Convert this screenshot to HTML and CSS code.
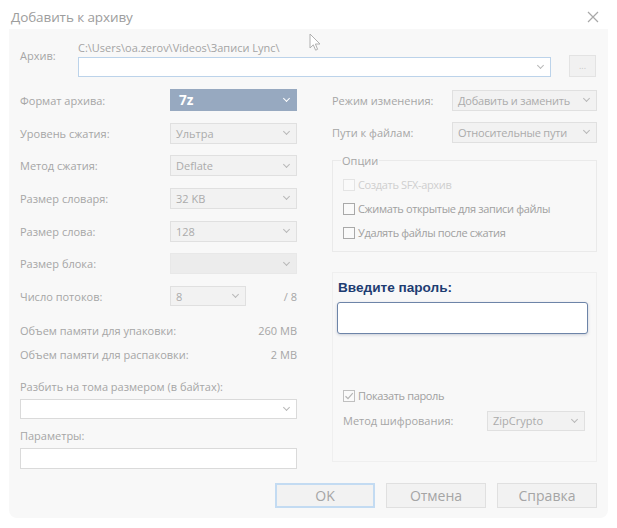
FILE: index.html
```html
<!DOCTYPE html>
<html lang="ru">
<head>
<meta charset="utf-8">
<title>Добавить к архиву</title>
<link rel="stylesheet" href="styles.css">
</head>
<body>
<div class="window">
  <div class="titlebar">
    <span class="title">Добавить к архиву</span>
    <svg class="close" width="12" height="12" viewBox="0 0 12 12"><path d="M1 1L11 11M11 1L1 11" stroke="#a8a8a8" stroke-width="1.2" fill="none"/></svg>
  </div>
  <div class="panel">
    <div class="archive-row">
      <span class="lbl archive-lbl">Архив:</span>
      <div class="archive-main">
        <div class="path">C:\Users\oa.zerov\Videos\Записи Lync\</div>
        <div class="combo archive-combo"><span></span><i class="chev"></i></div>
      </div>
      <div class="browse">...</div>
    </div>

    <div class="columns">
      <div class="left">
        <div class="frow"><span class="lbl">Формат архива:</span><div class="select primary"><span>7z</span><i class="chev white"></i></div></div>
        <div class="frow"><span class="lbl">Уровень сжатия:</span><div class="select"><span>Ультра</span><i class="chev"></i></div></div>
        <div class="frow"><span class="lbl">Метод сжатия:</span><div class="select"><span>Deflate</span><i class="chev"></i></div></div>
        <div class="frow"><span class="lbl">Размер словаря:</span><div class="select"><span>32 KB</span><i class="chev"></i></div></div>
        <div class="frow"><span class="lbl">Размер слова:</span><div class="select"><span>128</span><i class="chev"></i></div></div>
        <div class="frow"><span class="lbl">Размер блока:</span><div class="select filled"><span></span><i class="chev"></i></div></div>
        <div class="frow"><span class="lbl">Число потоков:</span><div class="threads"><div class="select small"><span>8</span><i class="chev"></i></div><span class="lbl">/ 8</span></div></div>
        <div class="mem">
          <div class="memrow"><span class="lbl">Объем памяти для упаковки:</span><span class="lbl">260 MB</span></div>
          <div class="memrow"><span class="lbl">Объем памяти для распаковки:</span><span class="lbl">2 MB</span></div>
        </div>
        <div class="lbl split-lbl">Разбить на тома размером (в байтах):</div>
        <div class="combo wide"><span></span><i class="chev"></i></div>
        <div class="lbl params-lbl">Параметры:</div>
        <div class="field wide"></div>
      </div>

      <div class="right">
        <div class="frow"><span class="lbl">Режим изменения:</span><div class="select rsel"><span>Добавить и заменить</span><i class="chev"></i></div></div>
        <div class="frow r2"><span class="lbl">Пути к файлам:</span><div class="select rsel"><span>Относительные пути</span><i class="chev"></i></div></div>
        <fieldset class="options">
          <legend class="lbl">Опции</legend>
          <label class="check disabled"><i class="box"></i><span>Создать SFX-архив</span></label>
          <label class="check"><i class="box"></i><span>Сжимать открытые для записи файлы</span></label>
          <label class="check"><i class="box"></i><span>Удалять файлы после сжатия</span></label>
        </fieldset>
        <div class="crypt">
          <div class="pw-lbl">Введите пароль:</div>
          <div class="pw-input"></div>
          <div class="crypt-lower">
            <label class="check"><i class="box checked"><svg width="12" height="12" viewBox="0 0 12 12"><path d="M2.5 6.2L5 8.6L9.8 3.2" stroke="#b4b4b4" stroke-width="1.2" fill="none"/></svg></i><span>Показать пароль</span></label>
            <div class="enc-row"><span class="lbl">Метод шифрования:</span><div class="select enc"><span>ZipCrypto</span><i class="chev"></i></div></div>
          </div>
        </div>
      </div>
    </div>

    <div class="buttons">
      <div class="btn default">OK</div>
      <div class="btn">Отмена</div>
      <div class="btn">Справка</div>
    </div>
  </div>
  <svg class="cursor" width="13" height="19" viewBox="0 0 13 19"><path d="M1 1L1 15L4.3 11.8L6.6 17.2L8.6 16.3L6.4 11H11Z" fill="#ffffff" stroke="#b0b0b0" stroke-width="1" stroke-linejoin="round"/></svg>
</div>
</body>
</html>
```

FILE: styles.css
```css
* { box-sizing: border-box; }
html, body { margin: 0; padding: 0; background: #ffffff; }
body {
  width: 617px;
  height: 528px;
  overflow: hidden;
  font-family: "Open Sans", "Noto Sans", sans-serif;
  font-size: 11px;
  color: #a3a3a3;
}
.window { padding: 0 9px; position: relative; }
.cursor { position: absolute; left: 309px; top: 33px; display: block; }
.titlebar {
  height: 29px;
  display: flex;
  align-items: center;
  justify-content: space-between;
  padding: 4px 9px 0 2px;
}
.title { font-size: 13.5px; color: #9d9d9d; letter-spacing: -0.1px; }
.close { display: block; }
.panel {
  background: #f8f8f8;
  border-radius: 0 0 8px 8px;
  height: 489px;
  padding: 12px 11px 10px 11px;
  display: flex;
  flex-direction: column;
}
.lbl { color: #a6a6a6; white-space: nowrap; }
.archive-row { display: flex; align-items: flex-start; height: 43px; flex: none; }
.archive-lbl { width: 58px; padding-top: 7px; }
.archive-main { width: 473px; }
.path { height: 16px; line-height: 14px; color: #a4a4a4; }
.combo {
  height: 20px;
  background: #ffffff;
  border: 1px solid #dadada;
  display: flex;
  align-items: center;
  justify-content: space-between;
  padding: 0 6px;
}
.archive-combo { border-color: #bcd3ea; }
.browse {
  margin-left: 18px;
  margin-top: 14px;
  width: 27px;
  height: 22px;
  border: 1px solid #e3e3e3;
  background: #f1f1f1;
  color: #c8c8c8;
  font-size: 9px;
  text-align: center;
  line-height: 20px;
}
.chev {
  width: 5px; height: 5px;
  border-right: 1px solid #b8b8b8;
  border-bottom: 1px solid #b8b8b8;
  transform: rotate(45deg);
  margin-top: -3px;
  margin-right: 1px;
  flex: none;
}
.chev.white { border-color: #ffffff; }
.columns { display: flex; gap: 35px; }
.left { width: 277px; }
.right { width: 265px; }
.frow {
  display: flex;
  align-items: center;
  justify-content: space-between;
  height: 32.7px;
}
.select {
  width: 127px;
  height: 21px;
  border: 1px solid #e0e0e0;
  background: #f2f2f2;
  display: flex;
  align-items: center;
  justify-content: space-between;
  padding: 0 6px 0 5px;
  color: #ababab;
  white-space: nowrap;
}
.select.primary {
  height: 22px;
  background: #97a9c0;
  border-color: #97a9c0;
  color: #ffffff;
  font-family: "Noto Sans", "Open Sans", sans-serif;
  font-weight: 700;
  font-size: 13.5px;
  padding-left: 8px;
}
.select.filled { background: #ececec; border-color: #e8e8e8; }
.threads { display: flex; align-items: center; width: 127px; justify-content: space-between; }
.select.small { width: 76px; height: 20px; }
.mem { padding-top: 6px; }
.memrow { display: flex; justify-content: space-between; align-items: center; height: 24px; }
.split-lbl { margin-top: 13px; height: 14px; line-height: 14px; }
.wide { width: 277px; }
.combo.wide { margin-top: 5px; height: 20px; }
.params-lbl { margin-top: 10px; height: 14px; line-height: 14px; }
.field {
  margin-top: 5px;
  height: 21px;
  background: #ffffff;
  border: 1px solid #dadada;
}
.rsel { width: 145px; height: 21px; font-size: 11px; letter-spacing: -0.2px; }
.r2 { height: 31px; }
.options {
  margin: 7px 0 0 0;
  padding: 6px 0 6px 10px;
  border: 1px solid #eaeaea;
  min-width: 0;
}
.options legend { padding: 0 1px; margin-left: -2px; font-size: 11px; line-height: 12px; }
.check {
  display: flex;
  align-items: center;
  height: 24px;
  font-size: 11px;
  letter-spacing: -0.35px;
  color: #a0a0a0;
  white-space: nowrap;
}
.check .box {
  width: 12px; height: 12px;
  border: 1px solid #a9a9a9;
  background: #fafafa;
  margin-right: 3px;
  flex: none;
  display: flex;
}
.check.disabled { color: #cfcfcf; }
.check.disabled .box { border-color: #e4e4e4; }
.box.checked { border-color: #c0c0c0; }
.box.checked svg { display: block; margin: -1px; }
.crypt {
  margin-top: 20px;
  height: 190px;
  border: 1px solid #efefef;
  padding: 7px 8px 0 4px;
}
.pw-lbl {
  font-family: "Liberation Sans", Arial, sans-serif;
  font-weight: 700;
  font-size: 13.6px;
  color: #1e3d72;
  height: 22px;
  padding-left: 1px;
}
.pw-input {
  width: 251px;
  height: 32px;
  background: #ffffff;
  border: 1px solid #6d84a8;
  border-radius: 3px;
  box-shadow: 0 1px 3px rgba(60, 80, 120, 0.25);
}
.crypt-lower { padding: 50px 0 0 6px; }
.enc-row { display: flex; align-items: center; justify-content: space-between; height: 26px; padding-right: 3px; }
.select.enc { width: 98px; height: 20px; font-size: 11px; }
.buttons {
  display: flex;
  justify-content: flex-end;
  gap: 11px;
  margin-top: auto;
}
.btn {
  width: 100px;
  height: 25px;
  border: 1px solid #e0e0e0;
  background: #f2f2f2;
  color: #a5a5a5;
  font-size: 14px;
  text-align: center;
  line-height: 23px;
}
.btn.default { border: 2px solid #c3dbf2; line-height: 21px; }
```
